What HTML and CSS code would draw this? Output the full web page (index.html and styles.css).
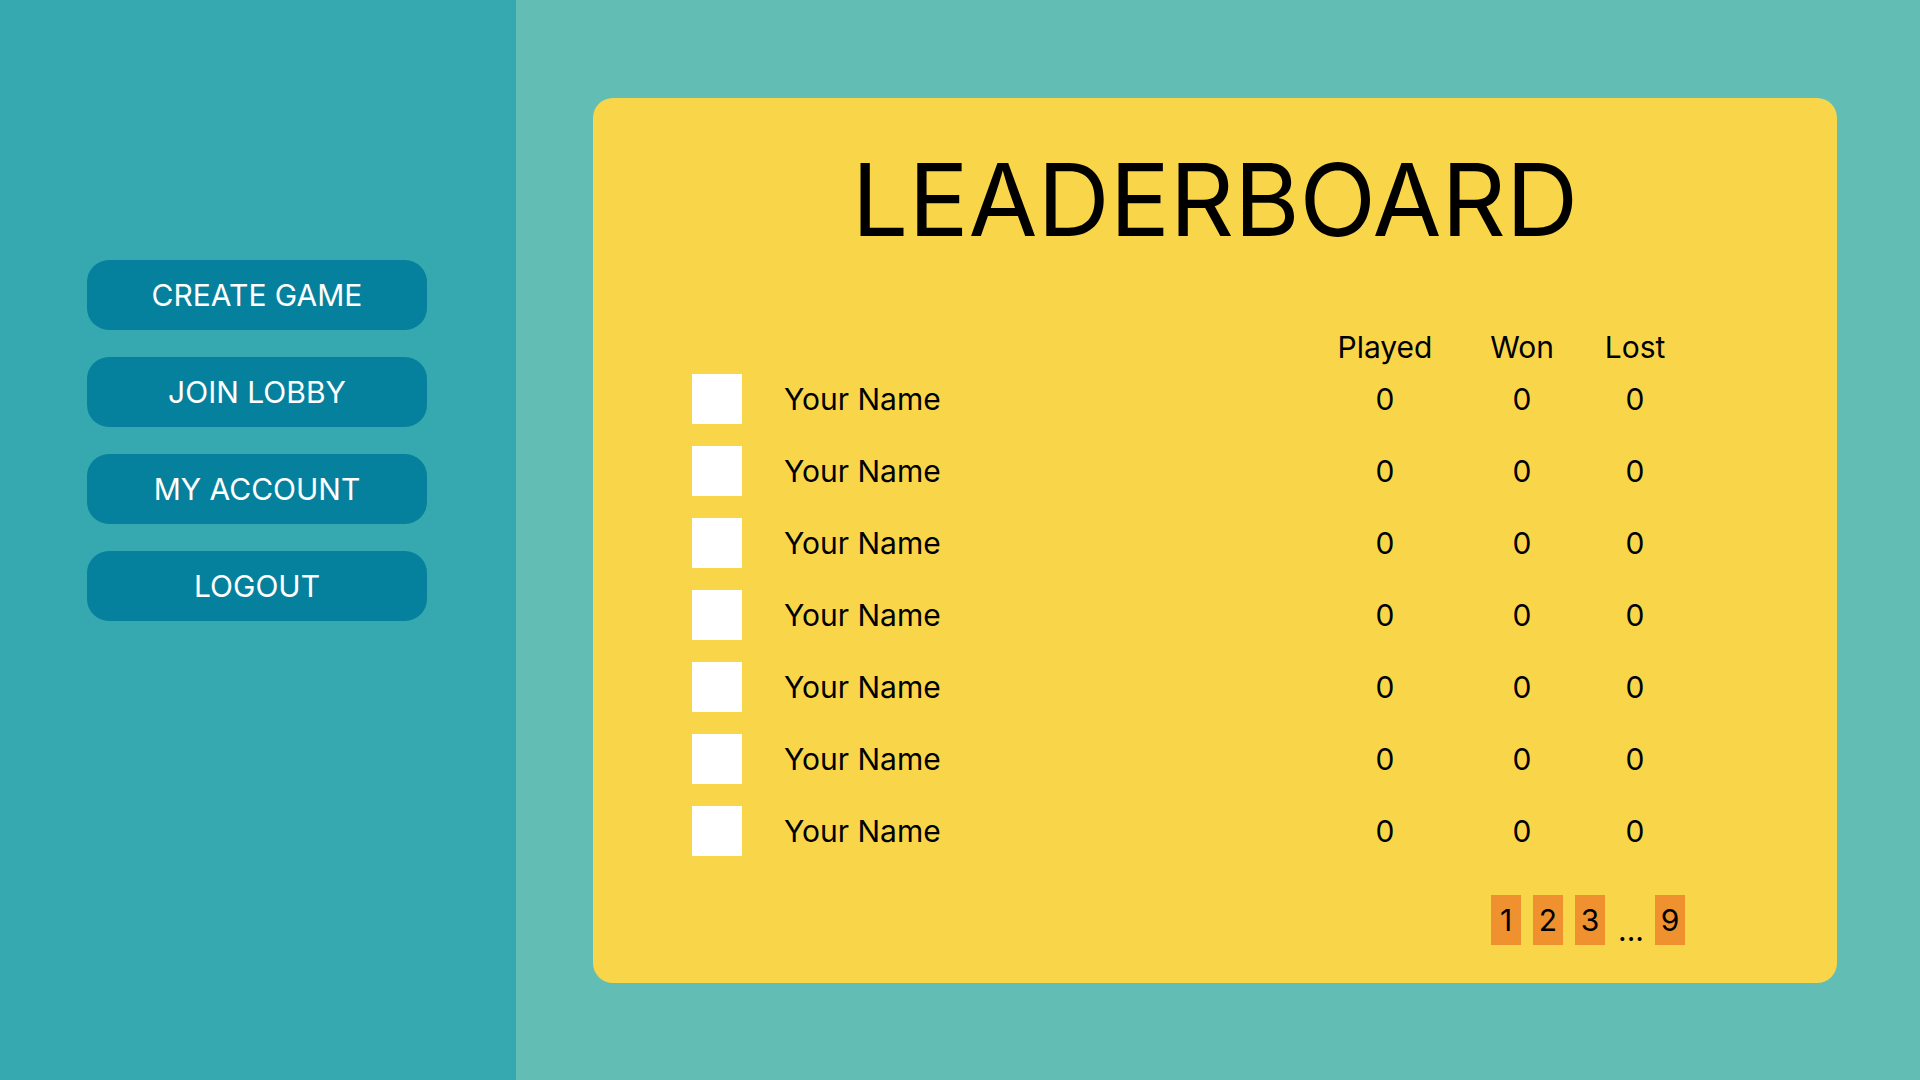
FILE: index.html
```html
<!DOCTYPE html>
<html lang="en">
<head>
<meta charset="utf-8">
<title>Leaderboard</title>
<link rel="stylesheet" href="styles.css">
</head>
<body>
<div class="app">
  <nav class="sidebar">
    <button class="nav-btn">CREATE GAME</button>
    <button class="nav-btn">JOIN LOBBY</button>
    <button class="nav-btn">MY ACCOUNT</button>
    <button class="nav-btn">LOGOUT</button>
  </nav>
  <main class="main">
    <section class="card">
      <h1 class="title">LEADERBOARD</h1>
      <div class="table">
        <div class="row head">
          <span class="avatar-slot"></span>
          <span class="name"></span>
          <span class="stat">Played</span>
          <span class="stat">Won</span>
          <span class="stat">Lost</span>
        </div>
        <div class="rows">
          <div class="row"><span class="avatar"></span><span class="name">Your Name</span><span class="stat">0</span><span class="stat">0</span><span class="stat">0</span></div>
          <div class="row"><span class="avatar"></span><span class="name">Your Name</span><span class="stat">0</span><span class="stat">0</span><span class="stat">0</span></div>
          <div class="row"><span class="avatar"></span><span class="name">Your Name</span><span class="stat">0</span><span class="stat">0</span><span class="stat">0</span></div>
          <div class="row"><span class="avatar"></span><span class="name">Your Name</span><span class="stat">0</span><span class="stat">0</span><span class="stat">0</span></div>
          <div class="row"><span class="avatar"></span><span class="name">Your Name</span><span class="stat">0</span><span class="stat">0</span><span class="stat">0</span></div>
          <div class="row"><span class="avatar"></span><span class="name">Your Name</span><span class="stat">0</span><span class="stat">0</span><span class="stat">0</span></div>
          <div class="row"><span class="avatar"></span><span class="name">Your Name</span><span class="stat">0</span><span class="stat">0</span><span class="stat">0</span></div>
        </div>
      </div>
      <div class="pager">
        <span class="page">1</span>
        <span class="page">2</span>
        <span class="page">3</span>
        <span class="dots">...</span>
        <span class="page">9</span>
      </div>
    </section>
  </main>
</div>
</body>
</html>
```

FILE: styles.css
```css
* { box-sizing: border-box; }
html, body { margin: 0; padding: 0; }
body {
  width: 1920px;
  height: 1080px;
  overflow: hidden;
  font-family: Inter, "Noto Sans", sans-serif;
  color: #000;
}
.app {
  display: flex;
  width: 1920px;
  height: 1080px;
}
.sidebar {
  width: 516px;
  flex: none;
  background: #36a8b0;
  display: flex;
  flex-direction: column;
  align-items: flex-start;
  padding: 260px 0 0 87px;
  gap: 27px;
}
.nav-btn {
  width: 340px;
  height: 70px;
  border: none;
  border-radius: 22px;
  background: #06819d;
  color: #fff;
  font-family: Inter, "Noto Sans", sans-serif;
  font-size: 30px;
  font-weight: 400;
  letter-spacing: 0;
  padding: 0;
  cursor: pointer;
}
.main {
  flex: 1;
  background: #62bdb5;
  padding: 98px 0 0 77px;
}
.card {
  width: 1244px;
  height: 885px;
  background: #f9d649;
  border-radius: 20px;
  padding: 42px 0 0 99px;
  display: flex;
  flex-direction: column;
}
.title {
  margin: 0 0 0 -99px;
  font-size: 100px;
  line-height: 120px;
  font-weight: 400;
  text-align: center;
  letter-spacing: 0;
}
.table {
  margin-top: 69px;
  display: flex;
  flex-direction: column;
  gap: 9px;
}
.rows {
  display: flex;
  flex-direction: column;
  gap: 22px;
}
.row {
  display: grid;
  grid-template-columns: 50px 583px 120px 154px 72px;
  column-gap: 0;
  align-items: center;
  font-size: 30px;
  line-height: 36px;
}
.row.head { height: 36px; }
.row:not(.head) { height: 50px; }
.avatar {
  width: 50px;
  height: 50px;
  background: #fff;
}
.name { padding-left: 42px; }
.stat { text-align: center; }
.pager {
  margin-top: 39px;
  margin-left: 799px;
  display: flex;
  align-items: flex-end;
  gap: 12px;
  font-size: 30px;
}
.page {
  width: 30px;
  height: 50px;
  background: #ef912e;
  display: flex;
  align-items: center;
  justify-content: center;
  line-height: 1;
}
.dots {
  width: 24px;
  line-height: 1;
  margin: 0 1px;
}
```
